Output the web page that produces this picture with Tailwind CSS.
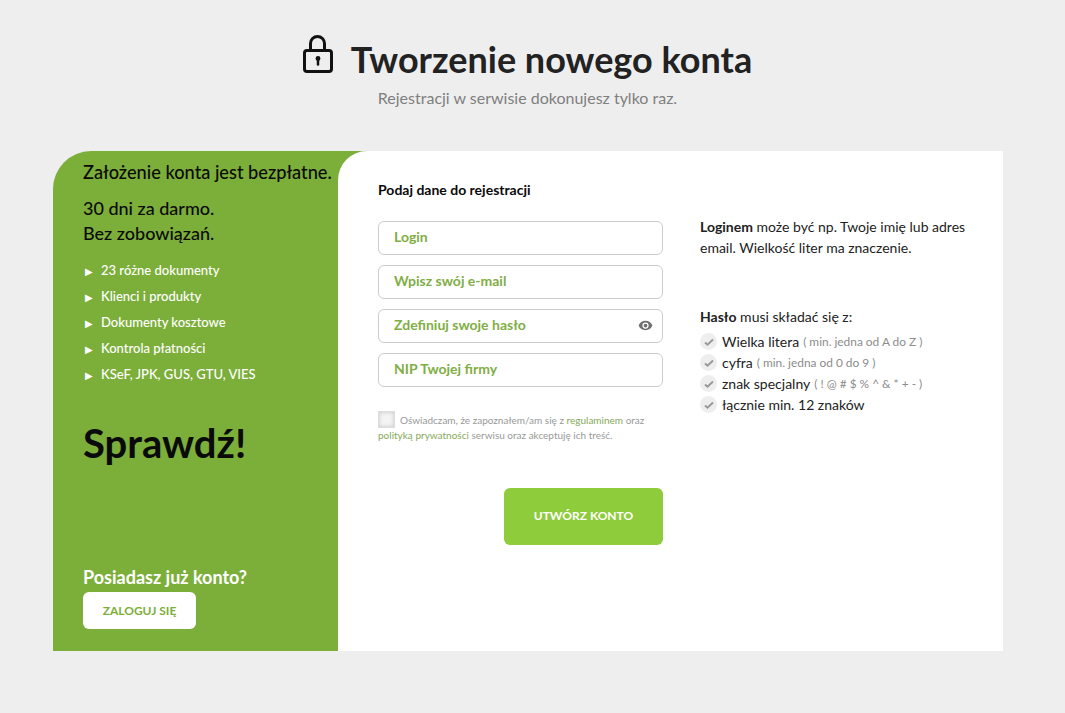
<!DOCTYPE html>
<html lang="pl">
<head>
    <meta charset="UTF-8">
    <meta name="viewport" content="width=device-width, initial-scale=1.0">
    <script src="https://cdn.jsdelivr.net/npm/@tailwindcss/browser@4"></script>
    <title>Tworzenie nowego konta</title>
</head>
<body class="bg-[#eeeeee] font-['Lato',sans-serif] h-[713px] overflow-hidden">
    <!-- Header -->
    <header class="w-[1055px] h-[151px] pt-[31px] flex flex-col items-center">
        <div class="flex items-center h-[56px]">
            <svg class="w-[30px] h-[40px] mr-[18px] mb-[8px]" viewBox="0 0 30 40" fill="none" stroke="#111" stroke-width="3">
                <rect x="1.5" y="15.5" width="27" height="21" rx="2.5"/>
                <path d="M7.5 15V8.500a7 7 0 0 1 14 0V15"/>
                <path d="M15 24v5.500" stroke-width="2.500" stroke-linecap="round"/>
                <circle cx="15" cy="23.500" r="2.400" fill="#111" stroke="none"/>
            </svg>
            <h1 class="text-[36px] font-bold text-[#222222] leading-[56px]">Tworzenie nowego konta</h1>
        </div>
        <p class="text-[16px] text-[#7f7f7f] leading-[22px]">Rejestracji w serwisie dokonujesz tylko raz.</p>
    </header>

    <main class="w-[950px] h-[500px] ml-[53px] flex bg-[#7cae3a] rounded-tl-[38px]">
        <!-- Left panel -->
        <aside class="w-[285px] shrink-0 pl-[30px] flex flex-col relative">
            <p class="absolute left-[30px] top-[9px] whitespace-nowrap text-[18.2px] font-medium text-[#0a0a0a] leading-[24px]">Założenie konta jest bezpłatne.</p>
            <p class="mt-[45px] text-[18px] font-medium text-[#0a0a0a] leading-[25px]">30 dni za darmo.<br>Bez zobowiązań.</p>
            <ul class="mt-[12px] text-[13px] font-medium text-white">
                <li class="h-[26px] flex items-center"><span class="w-[18px] pl-[2px] text-[10px]">&#9654;</span>23 różne dokumenty</li>
                <li class="h-[26px] flex items-center"><span class="w-[18px] pl-[2px] text-[10px]">&#9654;</span>Klienci i produkty</li>
                <li class="h-[26px] flex items-center"><span class="w-[18px] pl-[2px] text-[10px]">&#9654;</span>Dokumenty kosztowe</li>
                <li class="h-[26px] flex items-center"><span class="w-[18px] pl-[2px] text-[10px]">&#9654;</span>Kontrola płatności</li>
                <li class="h-[26px] flex items-center"><span class="w-[18px] pl-[2px] text-[10px]">&#9654;</span>KSeF, JPK, GUS, GTU, VIES</li>
            </ul>
            <p class="mt-[27px] text-[40px] font-bold text-[#0a0a0a] leading-[56px]">Sprawdź!</p>
            <p class="mt-auto text-[18px] font-bold text-white leading-[24px]">Posiadasz już konto?</p>
            <a class="mt-[3px] mb-[22px] w-[113px] h-[37px] rounded-[6px] bg-white flex items-center justify-center text-[12px] font-bold text-[#7cae3a]">ZALOGUJ SIĘ</a>
        </aside>

        <!-- Form panel -->
        <section class="flex-1 bg-white rounded-tl-[29px] pl-[40px] pr-[30px] flex">
            <div class="w-[285px] shrink-0">
                <h2 class="mt-[29px] text-[14px] font-bold text-[#0a0a0a] leading-[20px]">Podaj dane do rejestracji</h2>
                <div class="mt-[21px] flex flex-col gap-[10px]">
                    <div class="h-[34px] border border-[#cccccc] rounded-[6px] pl-[15px] pb-[4px] flex items-center text-[14px] font-bold text-[#7fae45]">Login</div>
                    <div class="h-[34px] border border-[#cccccc] rounded-[6px] pl-[15px] pb-[4px] flex items-center text-[14px] font-bold text-[#7fae45]">Wpisz swój e-mail</div>
                    <div class="relative h-[34px] border border-[#cccccc] rounded-[6px] pl-[15px] pb-[4px] flex items-center text-[14px] font-bold text-[#7fae45]">
                        Zdefiniuj swoje hasło
                        <svg class="absolute right-[9px] top-[8px] w-[15px] h-[15px]" viewBox="0 0 24 24" fill="#707070"><path d="M12 4.500C7 4.500 2.700 7.600 1 12c1.700 4.400 6 7.500 11 7.500s9.300-3.100 11-7.500c-1.700-4.400-6-7.500-11-7.500zM12 17a5 5 0 1 1 0-10 5 5 0 0 1 0 10zm0-8a3 3 0 1 0 0 6 3 3 0 0 0 0-6z"/></svg>
                    </div>
                    <div class="h-[34px] border border-[#cccccc] rounded-[6px] pl-[15px] pb-[4px] flex items-center text-[14px] font-bold text-[#7fae45]">NIP Twojej firmy</div>
                </div>
                <p class="mt-[24px] text-[10px] text-[#999999] leading-[14px]">
                    <span class="inline-block w-[17px] h-[17px] mr-[5px] align-[-4px] bg-[#f4f4f4] border border-[#dddddd] shadow-[inset_0_0_4px_#c4c4c4]"></span>Oświadczam, że zapoznałem/am się z <span class="text-[#86a95a]">regulaminem</span> oraz<br><span class="text-[#86a95a]">polityką prywatności</span> serwisu oraz akceptuję ich treść.
                </p>
                <div class="mt-[46px] flex justify-end">
                    <button class="w-[159px] h-[57px] rounded-[6px] bg-[#8ecc3c] text-white text-[12px] font-bold pb-[1px]">UTWÓRZ KONTO</button>
                </div>
            </div>

            <!-- Hints -->
            <div class="ml-[37px] flex-1 text-[14px] text-[#222222]">
                <p class="mt-[65px] leading-[21px]"><b>Loginem</b> może być np. Twoje imię lub adres email. Wielkość liter ma znaczenie.</p>
                <p class="mt-[48px] leading-[21px]"><b>Hasło</b> musi składać się z:</p>
                <ul class="mt-[4px]">
                    <li class="h-[21px] flex items-center whitespace-nowrap">
                        <span class="w-[17px] h-[17px] mr-[5px] rounded-full bg-[#eeeeee] flex items-center justify-center"><svg class="w-[10px] h-[10px]" viewBox="0 0 10 10" fill="none" stroke="#999999" stroke-width="2"><path d="M1 5.500l2.500 2.200L9 2.500"/></svg></span>
                        Wielka litera<span class="ml-[4px] text-[11.9px] text-[#8c8c8c]">( min. jedna od A do Z )</span>
                    </li>
                    <li class="h-[21px] flex items-center whitespace-nowrap">
                        <span class="w-[17px] h-[17px] mr-[5px] rounded-full bg-[#eeeeee] flex items-center justify-center"><svg class="w-[10px] h-[10px]" viewBox="0 0 10 10" fill="none" stroke="#999999" stroke-width="2"><path d="M1 5.500l2.500 2.200L9 2.500"/></svg></span>
                        cyfra<span class="ml-[4px] text-[11.9px] text-[#8c8c8c]">( min. jedna od 0 do 9 )</span>
                    </li>
                    <li class="h-[21px] flex items-center whitespace-nowrap">
                        <span class="w-[17px] h-[17px] mr-[5px] rounded-full bg-[#eeeeee] flex items-center justify-center"><svg class="w-[10px] h-[10px]" viewBox="0 0 10 10" fill="none" stroke="#999999" stroke-width="2"><path d="M1 5.500l2.500 2.200L9 2.500"/></svg></span>
                        znak specjalny<span class="ml-[4px] text-[11.9px] text-[#8c8c8c]">( ! @ # $ % ^ &amp; * + - )</span>
                    </li>
                    <li class="h-[21px] flex items-center whitespace-nowrap">
                        <span class="w-[17px] h-[17px] mr-[5px] rounded-full bg-[#eeeeee] flex items-center justify-center"><svg class="w-[10px] h-[10px]" viewBox="0 0 10 10" fill="none" stroke="#999999" stroke-width="2"><path d="M1 5.500l2.500 2.200L9 2.500"/></svg></span>
                        łącznie min. 12 znaków
                    </li>
                </ul>
            </div>
        </section>
    </main>
</body>
</html>
